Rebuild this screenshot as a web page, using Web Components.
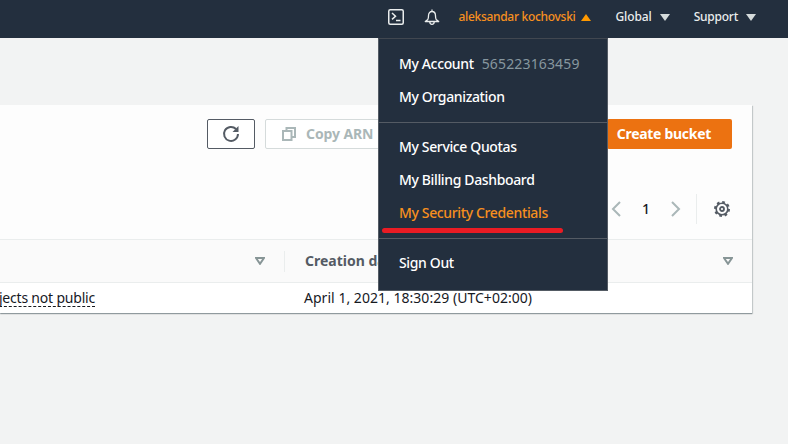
<!DOCTYPE html>
<html lang="en">
<head>
<meta charset="utf-8">
<title>S3 buckets</title>
<style>
  html, body { margin: 0; height: 100%; }
  body {
    background: #f2f3f3;
    color: #16191f;
    font: 14px/20px "Noto Sans", Roboto, sans-serif;
    overflow: hidden;
  }
</style>
</head>
<body>
<template id="tpl-topbar">
  <style>
    :host {
      display: flex;
      height: 38px;
      box-sizing: border-box;
      padding: 0 32px 4px 0;
      background: #232f3e;
      align-items: center;
      justify-content: flex-end;
      font-size: 12px;
      font-weight: 500;
      letter-spacing: -.1px;
      color: #eaeded;
    }
    .item { display: flex; align-items: center; }
    .caret { width: 0; height: 0; margin-left: 8px; border: 5.5px solid transparent; border-top: 7px solid #d5dbdb; border-bottom: 0; }
    .caret.up { border-top: 0; border-bottom: 7px solid #ff9900; margin-left: 6px; }
    .user { color: #f7901e; letter-spacing: -.3px; margin: 0 24px 0 18px; }
    .global { margin-right: 24px; }
    .support { letter-spacing: -.25px; }
    .shell { margin-right: 20px; }
    svg { display: block; }
  </style>
  <svg class="shell" width="16" height="16" viewBox="0 0 16 16" fill="none" stroke="#eaeded" stroke-width="1.5">
    <rect x=".75" y=".75" width="14.5" height="14.5" rx="1.5"/>
    <path d="M4 4l3.5 3.2L4 10.4M8 11.6h4.5"/>
  </svg>
  <svg width="16" height="16" viewBox="0 0 16 16" fill="none" stroke="#eaeded" stroke-width="1.3">
    <path d="M8 .5v2M3.800 10.500c.6-1 .7-2 .7-3.700 0-2.500 1.500-4.300 3.500-4.300s3.500 1.800 3.500 4.300c0 1.700.1 2.700.7 3.700l2.500 2H1.300z" stroke-linejoin="round"/>
    <path d="M5.800 12.800c0 1.500 1 2.500 2.200 2.500s2.200-1 2.200-2.500"/>
  </svg>
  <div class="item user">aleksandar kochovski<span class="caret up"></span></div>
  <div class="item global">Global<span class="caret"></span></div>
  <div class="item support">Support<span class="caret"></span></div>
</template>

<template id="tpl-menu">
  <style>
    :host {
      display: block;
      position: absolute;
      left: 378px;
      top: 38px;
      width: 230px;
      box-sizing: border-box;
      background: #232f3e;
      border: 1px solid #545b64;
      border-top-color: #414750;
      z-index: 5;
      color: #fff;
      font-size: 14px;
      font-weight: 500;
      letter-spacing: -.36px;
    }
    /* la marca roja de la captura */
    .mark { position: absolute; left: 3px; top: 189px; width: 181px; height: 5px; border-radius: 3px; background: #ea1c24; }
  </style>
  <slot></slot>
  <div class="mark"></div>
</template>

<template id="tpl-menu-group">
  <style>
    :host { display: block; padding: var(--top, 7px) 0 var(--bot, 9px); border-bottom: 1px solid #545b64; }
    :host(:last-child) { border-bottom: 0; }
  </style>
  <slot></slot>
</template>

<template id="tpl-menu-item">
  <style>
    :host { display: flex; height: 33px; align-items: center; padding-left: 20px; white-space: nowrap; }
    :host([active]) { color: #f7901e; }
    ::slotted(span) { color: #87979f; font-weight: 400; margin-left: 8px; letter-spacing: .15px; }
  </style>
  <slot></slot>
</template>

<template id="tpl-panel">
  <style>
    :host {
      display: block;
      width: 752px;
      margin-top: 67px;
      background: #fff;
      box-shadow: 0 1px 1px 0 rgba(0,28,36,.3), 1px 1px 1px 0 rgba(0,28,36,.15);
    }
    .head { height: 134px; background: #fdfdfd; border-bottom: 1px solid #eaeded; }
    .actions { display: flex; justify-content: flex-end; padding: 14px 20px 0 0; }
    .refresh { width: 46px; height: 28px; border: 1px solid #545b64; border-radius: 2px; display: flex; align-items: center; justify-content: center; margin-right: 10px; background: #fff; }
    .copy { width: 325px; height: 28px; border: 1px solid #d5dbdb; border-radius: 2px; display: flex; align-items: center; padding-left: 16px; color: #aab7b8; font-weight: 700; letter-spacing: -.1px; background: #fff; margin-right: -1px; }
    .copy svg { margin-right: 10px; }
    .create { width: 125px; height: 30px; background: #ec7211; border-radius: 2px; color: #fff; font-weight: 700; letter-spacing: -.3px; display: flex; align-items: center; justify-content: flex-end; padding-right: 21px; box-sizing: border-box; }
    .pager { display: flex; align-items: center; justify-content: flex-end; height: 30px; margin-top: 45px; padding-right: 22px; }
    .one { width: 50px; text-align: center; font-weight: 500; }
    .sep { width: 1px; height: 30px; background: #eaeded; margin: 0 17px 0 15px; }
    svg { display: block; }
  </style>
  <div class="head">
    <div class="actions">
      <div class="refresh">
        <svg width="18" height="18" viewBox="0 0 18 18" fill="none" stroke="#545b64" stroke-width="2"><path d="M14 4A7 7 0 1 0 16 9"/><path d="M16.500 1v6h-6z" fill="#545b64" stroke="none"/></svg>
      </div>
      <div class="copy">
        <svg width="14" height="14" viewBox="0 0 14 14" fill="none" stroke="#aab7b8" stroke-width="2"><rect x="1" y="4" width="8.500" height="9"/><path d="M4.500 3.500V1h8.500v9h-3"/></svg>Copy ARN
      </div>
      <div class="create">Create bucket</div>
    </div>
    <div class="pager">
      <svg width="10" height="16" viewBox="0 0 10 16" fill="none" stroke="#aab7b8" stroke-width="2"><path d="M9 1L2 8l7 7"/></svg>
      <span class="one">1</span>
      <svg width="10" height="16" viewBox="0 0 10 16" fill="none" stroke="#aab7b8" stroke-width="2"><path d="M1 1l7 7-7 7"/></svg>
      <div class="sep"></div>
      <svg width="16" height="16" viewBox="0 0 16 16" fill="none" stroke="#545b64"><circle cx="8" cy="8" r="5.800" stroke-width="1.600"/><circle cx="8" cy="8" r="7" stroke-width="2" stroke-dasharray="2.700 2.800"/><circle cx="8" cy="8" r="2" stroke-width="1.800"/></svg>
    </div>
  </div>
  <slot></slot>
</template>

<template id="tpl-table-head">
  <style>
    :host { display: grid; grid-template-columns: 284px 1fr; height: 43px; box-sizing: border-box; background: #fafafa; border-bottom: 1px solid #eaeded; align-items: center; font-weight: 700; color: #545b64; }
    .a { display: flex; justify-content: flex-end; padding-right: 19px; }
    .b { display: flex; justify-content: space-between; align-items: center; height: 21px; border-left: 1px solid #eaeded; padding: 0 19px 0 20px; }
    svg { display: block; }
  </style>
  <div class="a"><svg width="10" height="8" viewBox="0 0 10 8"><path d="M1 1h8L5 6.800z" fill="none" stroke="#879596" stroke-width="2"/></svg></div>
  <div class="b"><span><slot></slot></span><svg width="10" height="8" viewBox="0 0 10 8"><path d="M1 1h8L5 6.800z" fill="none" stroke="#879596" stroke-width="2"/></svg></div>
</template>

<template id="tpl-table-row">
  <style>
    :host { display: grid; grid-template-columns: 95px 1fr; column-gap: 209px; height: 30px; align-items: center; letter-spacing: .03px; }
    .a { display: flex; justify-content: flex-end; white-space: nowrap; letter-spacing: -.2px; }
    .a span { border-bottom: 1px dashed #16191f; line-height: 17px; }
  </style>
  <div class="a"><span><slot name="access"></slot></span></div>
  <div><slot></slot></div>
</template>

<script>
  // every element just stamps its template in an open shadow root
  const stamp = (name, tplId) => {
    customElements.define(name, class extends HTMLElement {
      connectedCallback() {
        if (this.shadowRoot) return;
        this.attachShadow({ mode: 'open' })
          .appendChild(document.getElementById(tplId).content.cloneNode(true));
      }
    });
  };
  stamp('aws-topbar', 'tpl-topbar');
  stamp('aws-menu', 'tpl-menu');
  stamp('aws-menu-group', 'tpl-menu-group');
  stamp('aws-menu-item', 'tpl-menu-item');
  stamp('s3-panel', 'tpl-panel');
  stamp('s3-table-head', 'tpl-table-head');
  stamp('s3-table-row', 'tpl-table-row');
</script>

<aws-topbar></aws-topbar>
<aws-menu>
  <aws-menu-group style="--top:8px">
    <aws-menu-item>My Account <span>565223163459</span></aws-menu-item>
    <aws-menu-item>My Organization</aws-menu-item>
  </aws-menu-group>
  <aws-menu-group>
    <aws-menu-item>My Service Quotas</aws-menu-item>
    <aws-menu-item>My Billing Dashboard</aws-menu-item>
    <aws-menu-item active>My Security Credentials</aws-menu-item>
  </aws-menu-group>
  <aws-menu-group style="--bot:11px">
    <aws-menu-item>Sign Out</aws-menu-item>
  </aws-menu-group>
</aws-menu>
<s3-panel>
  <s3-table-head>Creation date</s3-table-head>
  <s3-table-row><span slot="access">jects not public</span>April 1, 2021, 18:30:29 (UTC+02:00)</s3-table-row>
</s3-panel>
</body>
</html>
